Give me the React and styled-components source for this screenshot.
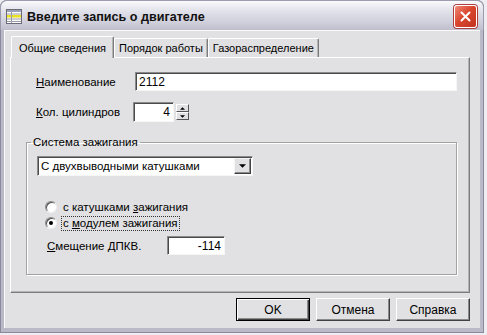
import React from 'react';
import styled, { createGlobalStyle } from 'styled-components';

const GlobalStyle = createGlobalStyle`
  html, body {
    margin: 0;
    padding: 0;
    background: #eeeef2;
  }
  body {
    font-family: "Liberation Sans", Arial, sans-serif;
    font-size: 11.5px;
    color: #000;
  }
`;

const Window = styled.div`
  width: 484px;
  height: 333px;
  display: flex;
  flex-direction: column;
  background: #b9b9c8;
  border-radius: 7px 7px 0 0;
  box-shadow: inset 1px 0 0 #8a8a9c, inset -1px 0 0 #8a8a9c, inset 0 -1px 0 #8a8a9c;
  box-sizing: border-box;
`;

const TitleBar = styled.div`
  height: 30px;
  flex-shrink: 0;
  display: flex;
  align-items: center;
  padding: 2px 5px 0 5px;
  box-sizing: border-box;
  border-radius: 7px 7px 0 0;
  background: linear-gradient(#fbfbfd 0%, #ececf2 18%, #dcdce6 45%, #cfcfdb 75%, #bebecd 100%);
  border: 1px solid #9c9cae;
  border-bottom: none;
`;

const Title = styled.span`
  flex: 1;
  margin-left: 5px;
  font-weight: bold;
  font-size: 12.6px;
  color: #111;
`;

const CloseButton = styled.div`
  width: 21px;
  height: 21px;
  border-radius: 3px;
  display: flex;
  align-items: center;
  justify-content: center;
  background: linear-gradient(135deg, #f08a78 0%, #d9472f 45%, #c23220 100%);
  border: 1px solid #fff;
  box-shadow: 0 0 0 1px #b04040;
  margin-right: 1px;
`;

const Client = styled.div`
  flex: 1;
  margin: 0 4px 5px 4px;
  background: #e1e1e3;
  padding: 5px 0 0 6px;
  display: flex;
  flex-direction: column;
  box-shadow: inset 1px 1px 0 #fafafa;
`;

const TabStrip = styled.div`
  display: flex;
  align-items: flex-end;
  height: 22px;
  padding-left: 2px;
`;

const Tab = styled.div`
  position: relative;
  height: ${p => (p.active ? '21px' : '18px')};
  margin-bottom: ${p => (p.active ? '-1px' : '0')};
  margin-left: ${p => (p.active ? '-1px' : '0')};
  padding: 0 ${p => (p.active ? '7px' : '4px')};
  display: flex;
  align-items: center;
  font-size: 11px;
  background: #e1e1e3;
  border-top: 1px solid #fff;
  border-left: 1px solid #fff;
  border-right: 1px solid #7c7c7c;
  border-radius: 2px 2px 0 0;
  box-shadow: inset -1px 0 0 #b4b4b4;
  z-index: ${p => (p.active ? 1 : 0)};
  white-space: nowrap;
`;

const Panel = styled.div`
  width: 460px;
  height: 236px;
  box-sizing: border-box;
  border-top: 1px solid #fff;
  border-left: 1px solid #fff;
  border-right: 1px solid #7c7c7c;
  border-bottom: 1px solid #7c7c7c;
  box-shadow: inset -1px -1px 0 #b4b4b4;
  padding: 14px 0 0 15px;
  display: flex;
  flex-direction: column;
`;

const Row = styled.div`
  display: flex;
  align-items: center;
  margin-left: ${p => p.indent || 10}px;
  margin-top: ${p => p.top || 0}px;
`;

const Label = styled.span`
  width: ${p => p.w}px;
  flex-shrink: 0;
`;

const U = styled.span`
  text-decoration: underline;
`;

const Field = styled.div`
  width: ${p => p.w}px;
  height: ${p => p.h || 19}px;
  box-sizing: border-box;
  background: #fff;
  border-style: solid;
  border-width: 1px;
  border-color: #8a8a8a #f6f6f6 #f6f6f6 #8a8a8a;
  box-shadow: inset 1px 1px 0 #4a4a4a;
  display: flex;
  align-items: center;
  justify-content: ${p => (p.right ? 'flex-end' : 'flex-start')};
  padding: 0 ${p => (p.right ? '3px' : '0')} 0 3px;
  font-size: 12px;
`;

const SpinButtons = styled.div`
  display: flex;
  flex-direction: column;
  margin-left: 2px;
`;

const SpinButton = styled.div`
  width: 13px;
  height: 8px;
  background: #e1e1e3;
  border-top: 1px solid #fff;
  border-left: 1px solid #fff;
  border-right: 1px solid #555;
  border-bottom: 1px solid #555;
  box-sizing: border-box;
  display: flex;
  align-items: center;
  justify-content: center;
`;

const Group = styled.fieldset`
  width: 431px;
  box-sizing: border-box;
  margin: 13px 0 0 0;
  padding: 7px 10px 19px 10px;
  border: 1px solid #a2a2a2;
  box-shadow: 1px 1px 0 #fff, inset 1px 1px 0 #fff;
  display: flex;
  flex-direction: column;
`;

const Legend = styled.legend`
  padding: 0 2px;
  margin-left: -6px;
  line-height: 14px;
`;

const Combo = styled.div`
  width: 216px;
  height: 20px;
  box-sizing: border-box;
  background: #fff;
  border-style: solid;
  border-width: 1px;
  border-color: #8a8a8a #f6f6f6 #f6f6f6 #8a8a8a;
  box-shadow: inset 1px 1px 0 #4a4a4a;
  display: flex;
  align-items: center;
  padding: 1px 1px 1px 3px;
`;

const ComboText = styled.span`
  flex: 1;
`;

const DropButton = styled.div`
  width: 17px;
  height: 16px;
  box-sizing: border-box;
  background: #e1e1e3;
  border-top: 1px solid #f4f4f4;
  border-left: 1px solid #f4f4f4;
  border-right: 1px solid #404040;
  border-bottom: 1px solid #404040;
  box-shadow: inset -1px -1px 0 #8a8a8a;
  display: flex;
  align-items: center;
  justify-content: center;
`;

const RadioRow = styled.div`
  display: flex;
  align-items: center;
  height: 16px;
  margin-left: 8px;
  margin-top: ${p => p.top || 0}px;
`;

const RadioCircle = styled.span`
  position: relative;
  width: 12px;
  height: 12px;
  box-sizing: border-box;
  border-radius: 50%;
  background: #fff;
  border: 1px solid;
  border-color: #8a8a8a #f0f0f0 #f0f0f0 #8a8a8a;
  box-shadow: inset 1px 1px 0 #505050;
  margin-right: ${p => (p.focus ? '4px' : '6px')};

  &::after {
    content: '';
    display: ${p => (p.checked ? 'block' : 'none')};
    position: absolute;
    left: 3px;
    top: 3px;
    width: 4px;
    height: 4px;
    border-radius: 50%;
    background: #000;
  }
`;

const RadioLabel = styled.span`
  padding: 0 1px;
  border: 1px ${p => (p.focus ? 'dotted #333' : 'solid transparent')};
  line-height: 13px;
`;

const ButtonRow = styled.div`
  display: flex;
  justify-content: flex-end;
  gap: 6px;
  width: 460px;
  margin-top: 5px;
`;

const Button = styled.div`
  width: 74px;
  height: 23px;
  box-sizing: border-box;
  display: flex;
  align-items: center;
  justify-content: center;
  font-size: 12px;
  background: #e1e1e3;
  border-top: 1px solid ${p => (p.primary ? '#000' : '#fff')};
  border-left: 1px solid ${p => (p.primary ? '#000' : '#fff')};
  border-right: 1px solid ${p => (p.primary ? '#000' : '#404040')};
  border-bottom: 1px solid ${p => (p.primary ? '#000' : '#404040')};
  box-shadow: ${p =>
    p.primary
      ? 'inset 1px 1px 0 #fff, inset -1px -1px 0 #404040, inset -2px -2px 0 #8a8a8a'
      : 'inset -1px -1px 0 #8a8a8a'};
`;

const AppIcon = () => (
  <svg width="16" height="15" viewBox="0 0 16 15">
    <rect x="0.5" y="0.5" width="15" height="14" fill="#fff" stroke="#6a6a78" />
    <rect x="1" y="1" width="14" height="2" fill="#9aa0b8" />
    <rect x="1" y="6" width="14" height="2.5" fill="#e8e020" />
    <line x1="1" y1="5" x2="15" y2="5" stroke="#9a9aa8" />
    <line x1="1" y1="10" x2="15" y2="10" stroke="#9a9aa8" />
    <line x1="1" y1="12.5" x2="15" y2="12.5" stroke="#9a9aa8" />
    <line x1="5.5" y1="3" x2="5.5" y2="14" stroke="#9a9aa8" />
  </svg>
);

const CloseIcon = () => (
  <svg width="11" height="11" viewBox="0 0 11 11">
    <path d="M1.5 1.5 L9.5 9.5 M9.5 1.5 L1.5 9.5" stroke="#fff" strokeWidth="2" strokeLinecap="round" />
  </svg>
);

const Arrow = ({ up, size = 5 }) => (
  <svg width={size} height={Math.ceil(size / 2)} viewBox="0 0 6 3">
    <path d={up ? 'M0 3 L3 0 L6 3 Z' : 'M0 0 L6 0 L3 3 Z'} fill="#000" />
  </svg>
);

export default function App() {
  return (
    <>
      <GlobalStyle />
      <Window>
        <TitleBar>
          <AppIcon />
          <Title>Введите запись о двигателе</Title>
          <CloseButton>
            <CloseIcon />
          </CloseButton>
        </TitleBar>
        <Client>
          <TabStrip>
            <Tab active>Общие сведения</Tab>
            <Tab>Порядок работы</Tab>
            <Tab>Газораспределение</Tab>
          </TabStrip>
          <Panel>
            <Row>
              <Label w={99}><U>Н</U>аименование</Label>
              <Field w={322}>2112</Field>
            </Row>
            <Row top={11}>
              <Label w={97}><U>К</U>ол. цилиндров</Label>
              <Field w={41} h={20} right>4</Field>
              <SpinButtons>
                <SpinButton><Arrow up size={5} /></SpinButton>
                <SpinButton><Arrow size={5} /></SpinButton>
              </SpinButtons>
            </Row>
            <Group>
              <Legend>Система зажигания</Legend>
              <Combo>
                <ComboText>С двухвыводными катушками</ComboText>
                <DropButton><Arrow size={7} /></DropButton>
              </Combo>
              <RadioRow top={23}>
                <RadioCircle />
                <span>с катушками <U>з</U>ажигания</span>
              </RadioRow>
              <RadioRow>
                <RadioCircle checked focus />
                <RadioLabel focus>с <U>м</U>одулем зажигания</RadioLabel>
              </RadioRow>
              <Row indent={10} top={5}>
                <Label w={120}><U>С</U>мещение ДПКВ.</Label>
                <Field w={58} right>-114</Field>
              </Row>
            </Group>
          </Panel>
          <ButtonRow>
            <Button primary>OK</Button>
            <Button>Отмена</Button>
            <Button>Справка</Button>
          </ButtonRow>
        </Client>
      </Window>
    </>
  );
}
